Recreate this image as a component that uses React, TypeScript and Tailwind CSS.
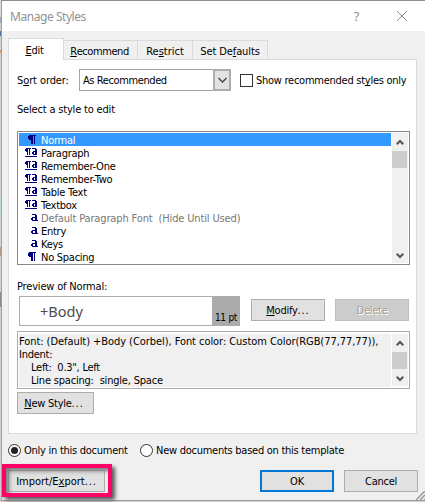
import type { ReactNode } from "react";

const U = ({ children }: { children: ReactNode }) => (
  <span className="underline decoration-1 underline-offset-[1px] [text-decoration-skip-ink:none]">{children}</span>
);

const Dots = () => <span className="tracking-[0.9px]">...</span>;

const Btn = ({ className, children }: { className: string; children: ReactNode }) => (
  <button className={`flex h-[22px] shrink-0 items-center justify-center whitespace-pre ${className}`}>{children}</button>
);

const Arrow = ({ up }: { up?: boolean }) => (
  <svg width="8" height="7" viewBox="0 0 8 7" fill="none" stroke="#555" strokeWidth="2">
    <path d={up ? "M0.7 5.3 4 2 7.3 5.3" : "M0.7 1.7 4 5 7.3 1.7"} />
  </svg>
);

const Scrollbar = () => (
  <div className="flex w-[16px] shrink-0 flex-col items-center bg-[#f0f0f0]">
    <div className="flex h-[18px] w-full items-center justify-center pr-px"><Arrow up /></div>
    <div className="mr-px h-[17px] w-[15px] bg-[#cdcdcd]" />
    <div className="flex w-full flex-1 items-end justify-center pr-px pb-[4px]"><Arrow /></div>
  </div>
);

const Pilcrow = () => (
  <svg className="mr-[2px]" width="8" height="9" viewBox="0 0 8 9" fill="#000080" shapeRendering="crispEdges">
    <path d="M1 0h7v1H7v8H6V1H5v8H3V5H1V4H0V1h1z" />
  </svg>
);

const Linked = () => (
  <svg className="mr-px" width="12" height="10" viewBox="0 0 12 10" fill="#000080" shapeRendering="crispEdges">
    <path d="M1 0h5v1H5v6H4V1H3v6H2V4H1V3H0V1h1zM7 0h4v1h1v6H8V6H7V4h1V3h2V1H7zM9 4v2h1V4zM0 8h12v1H0z" />
  </svg>
);

const CharStyle = () => (
  <svg width="7" height="7" viewBox="0 0 7 7" fill="#000080" shapeRendering="crispEdges">
    <path d="M1 0h4v1h1v5h1v1H1V6H0V4h1V3h3V1H1zM2 4v2h2V4z" />
  </svg>
);

const styles: [string, string][] = [
  ["p", "Normal"],
  ["l", "Paragraph"],
  ["l", "Remember-One"],
  ["l", "Remember-Two"],
  ["l", "Table Text"],
  ["l", "Textbox"],
  ["a", "Default Paragraph Font  (Hide Until Used)"],
  ["a", "Entry"],
  ["a", "Keys"],
  ["p", "No Spacing"],
];

const Radio = ({ on }: { on?: boolean }) => (
  <span className="flex size-[13px] shrink-0 items-center justify-center rounded-full border border-[#333] bg-white">
    {on && <span className="size-[7px] rounded-full bg-[#222]" />}
  </span>
);

export default function App() {
  return (
    <div className="relative flex h-[502px] w-[425px] overflow-hidden bg-[#d0d0d0] font-['DejaVu_Sans_Condensed','DejaVu_Sans',sans-serif] text-[11px] leading-[13px] tracking-[-0.26px] text-black [font-stretch:condensed]">
      <div className="flex w-px shrink-0 flex-col">
        <span className="h-[17px] bg-[#d8d8d8]" />
        <span className="h-[6px] bg-[#a4a8ac]" />
        <span className="h-[8px] bg-[#d0d0d0]" />
        <span className="h-[5px] bg-[#526fa0]" />
        <span className="h-[14px] bg-[#d4d4d4]" />
        <span className="h-[3px] bg-[#d69a58]" />
        <span className="h-[144px] bg-[#d4d4d4]" />
        <span className="h-[18px] bg-[#bce0e0]" />
        <span className="h-[32px] bg-[#d4d4d4]" />
        <span className="h-[9px] bg-[#b79a8e]" />
        <span className="h-[36px] bg-[#d4d4d4]" />
        <span className="h-[15px] bg-[#858a90]" />
      </div>
      <div className="flex h-[501px] flex-1 flex-col border-t border-b border-l border-t-[#8d8d96] border-b-[#a0a0a0] border-l-[#a0a0a4] bg-[#f0f0f0]">
        <header className="flex h-[30px] shrink-0 items-center bg-white pl-[8px] font-['Noto_Sans',sans-serif] text-[12px] tracking-[-0.45px] text-[#929292] [font-stretch:normal]">
          <span className="flex-1">Manage Styles</span>
          <span className="mr-[37px] text-[13px]">?</span>
          <svg className="mr-[17px]" width="12" height="12" viewBox="0 0 12 12" stroke="#929292">
            <path d="M1 1l10 10M11 1 1 11" />
          </svg>
        </header>

        <nav className="flex h-[28px] shrink-0 items-end pl-[6px]">
          <div className="z-10 -mb-px flex h-[22px] w-[56px] items-center justify-center border border-b-0 border-[#dadada] bg-white pt-[2px] pr-[3px]"><U>E</U>dit</div>
          <div className="flex h-[19px] w-[74px] items-center justify-center border-t border-r border-[#dadada] pt-[2px] pr-[2px] tracking-[-0.42px]"><U>R</U>ecommend</div>
          <div className="flex h-[19px] w-[55px] items-center justify-center border-t border-r border-[#dadada] pt-[2px] tracking-[0px]">Re<U>s</U>trict</div>
          <div className="flex h-[19px] w-[75px] items-center justify-center border-t border-r border-[#dadada] pt-[2px] tracking-[-0.1px]">Set De<U>f</U>aults</div>
        </nav>

        <main className="ml-[6px] flex h-[375px] w-[409px] shrink-0 flex-col border border-[#dadada] bg-white pl-[8px]">
          <div className="mt-[9px] flex h-[22px] shrink-0 items-center">
            <span className="w-[62px] tracking-[-0.1px] whitespace-nowrap">S<U>o</U>rt order:</span>
            <div className="flex h-[22px] w-[152px] items-stretch border border-[#a5a5a8]">
              <span className="flex flex-1 items-center pl-[3px] tracking-[-0.4px]">As Recommended</span>
              <span className="-my-px -mr-px flex w-[18px] items-center justify-center border-2 border-[#adadb0] bg-[#e1e1e1]">
                <svg width="9" height="6" viewBox="0 0 9 6" fill="none" stroke="#444" strokeWidth="1.3"><path d="M.5 1l4 4 4-4" /></svg>
              </span>
            </div>
            <span className="ml-[9px] size-[13px] border border-[#333]" />
            <span className="ml-[3px] whitespace-nowrap">Show recommended st<U>y</U>les only</span>
          </div>
          <div className="mt-[12px] shrink-0 tracking-[-0.18px]">Select a style to edit</div>

          <div className="mt-[15px] flex h-[134px] w-[393px] shrink-0 justify-between border border-[#828790] p-px">
            <ul className="w-[372px]">
              {styles.map(([kind, name], i) => (
                <li key={name} className={`flex h-[13px] items-center ${i === 0 ? "bg-[#3399ff] text-white" : i === 6 ? "tracking-[-0.14px] text-[#777]" : ""}`}>
                  <span className="mr-[3px] flex w-[19px] justify-end">
                    {kind === "p" ? <Pilcrow /> : kind === "l" ? <Linked /> : <CharStyle />}
                  </span>
                  <span className="pt-[2px] leading-[12px] whitespace-pre">{name}</span>
                </li>
              ))}
            </ul>
            <Scrollbar />
          </div>

          <div className="mt-[15px] shrink-0 tracking-[-0.18px]">Preview of Normal:</div>
          <div className="mt-[3px] flex h-[30px] shrink-0 items-center pl-[2px]">
            <div className="flex h-[30px] w-[221px] border border-[#acacac]">
              <span className="flex flex-1 items-center pl-[20px] font-['Noto_Sans',sans-serif] text-[14.5px] tracking-normal text-[#4d4d4d] [font-stretch:normal]">+Body</span>
              <span className="-my-px -mr-px flex w-[28px] items-end justify-center bg-[#ababab] pb-[2px] text-[10px]">11 pt</span>
            </div>
            <Btn className="mt-[-2px] ml-[11px] w-[74px] border border-[#adadad] bg-[#e1e1e1]"><U>M</U>odify<Dots /></Btn>
            <Btn className="mt-[-2px] ml-[10px] w-[74px] border border-[#bfbfbf] bg-[#cccccc] text-[#a0a0a0] [text-shadow:1px_1px_0_#fff]">Delete</Btn>
          </div>

          <div className="mt-[5px] flex h-[58px] w-[393px] shrink-0 justify-between border border-[#acacb0] px-px py-[2px]">
            <div className="h-[53px] w-[372px] bg-[#f0f0f0] pt-px whitespace-pre">
              <p className="tracking-[-0.06px]">Font: (Default) +Body (Corbel), Font color: Custom Color(RGB(77,77,77)),</p>
              <p>Indent:</p>
              <p className="pl-[12px]">Left:  0.3", Left</p>
              <p className="pl-[12px] tracking-[-0.2px]">Line spacing:  single, Space</p>
            </div>
            <Scrollbar />
          </div>
          <Btn className="mt-[3px] w-[77px] border border-[#adadad] bg-[#e1e1e1] pr-[3px]"><U>N</U>ew Style<Dots /></Btn>
        </main>

        <div className="mt-[9px] flex h-[15px] shrink-0 items-center whitespace-nowrap pl-[6px]">
          <Radio on />
          <span className="ml-[3px] w-[116px]">Only in this document</span>
          <Radio />
          <span className="ml-[3px]">New documents based on this template</span>
        </div>

        <footer className="mt-[12px] flex shrink-0 pl-[6px]">
          <Btn className="w-[97px] border border-[#adadad] bg-[#e1e1e1] tracking-[0px]">Import/E<U>x</U>port<Dots /></Btn>
          <Btn className="ml-[155px] w-[74px] border-2 border-[#0078d7] bg-[#e1e1e1]">OK</Btn>
          <Btn className="ml-[10px] w-[74px] border border-[#adadad] bg-[#e1e1e1]">Cancel</Btn>
        </footer>
      </div>

      <div className="absolute top-[464px] left-[2px] h-[33px] w-[110px] border-4 border-[#ff0066] shadow-[3px_3px_4px_#555,inset_3px_3px_4px_#777]" />
      <svg className="absolute right-0 bottom-[2px]" width="9" height="9" viewBox="0 0 9 9" stroke="#999" strokeWidth="1.5">
        <path d="M0 9 9 0M4 9l5-5M8 9l1-1" />
      </svg>
    </div>
  );
}
